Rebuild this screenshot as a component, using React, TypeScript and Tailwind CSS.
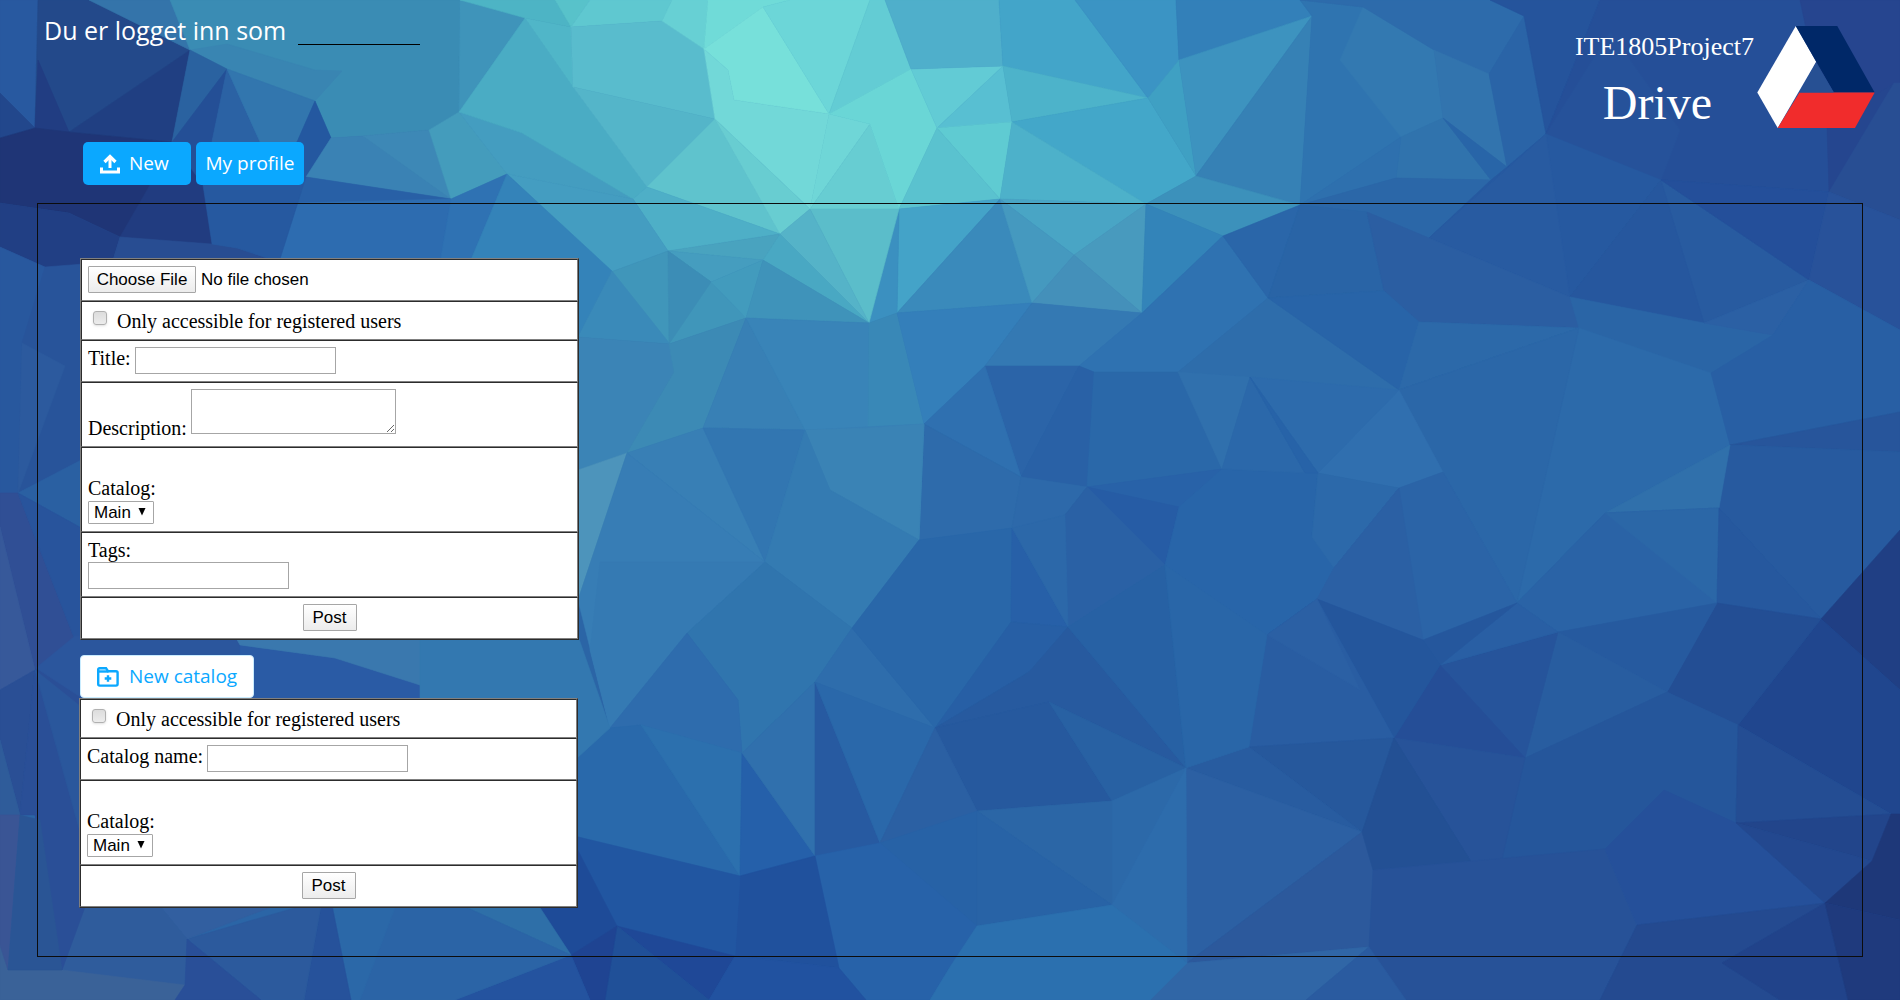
import React, { useId } from "react";

// Facets of the low-poly wallpaper: [fill, points] on a 1900 x 1000 canvas.
const FACETS: [string, string][] = [
  ["#2859a0", "0,0 38,0 35,128 0,93"],
  ["#22478c", "0,93 35,128 0,138"],
  ["#23498a", "38,0 89,0 190,50 69,132 35,128"],
  ["#213d82", "38,60 69,132 35,128"],
  ["#203f82", "69,132 190,50 172,142"],
  ["#1f3576", "0,138 35,128 69,132 172,142 203,185 212,244 120,237 69,213 0,203"],
  ["#213f84", "0,203 69,213 120,237 110,270 45,267 0,247"],
  ["#213c80", "172,142 203,142 203,185 212,244 120,237 150,185"],
  ["#3474aa", "89,0 170,0 190,50"],
  ["#3a8cb4", "170,0 460,0 459,112 429,130 363,136 331,138 315,101 227,69 190,50"],
  ["#3985b2", "190,50 227,44 315,70 342,71 315,101 227,69"],
  ["#2a62a0", "190,50 227,69 172,142"],
  ["#244f96", "227,69 203,185 172,142"],
  ["#2b62a4", "227,69 260,142 203,185"],
  ["#3276ae", "227,69 315,101 297,142 260,142"],
  ["#2458a0", "315,101 331,138 306,177 260,190 203,185 297,142"],
  ["#3a82b4", "331,138 363,136 451,199 306,177"],
  ["#3d88b6", "363,136 429,130 451,199"],
  ["#449cbc", "429,130 459,112 507,174 451,199"],
  ["#449dc0", "459,112 522,133 633,199 507,174"],
  ["#3f94ba", "460,0 525,18 459,112"],
  ["#4aacc4", "525,18 573,87 647,187 633,199 522,133 459,112"],
  ["#50b6c8", "525,18 571,27 573,87"],
  ["#4db4c5", "460,0 555,0 571,27 525,18"],
  ["#58c2ca", "555,0 590,0 571,27"],
  ["#5fc8d0", "590,0 672,0 662,21 571,27"],
  ["#59bccd", "571,27 662,21 704,49 715,119 573,87"],
  ["#54b5c9", "573,87 715,119 647,187"],
  ["#67d0d4", "662,21 672,0 708,0 704,49"],
  ["#70dbd8", "708,0 790,0 763,7 704,49"],
  ["#77e0da", "704,49 763,7 829,114 734,100 728,70"],
  ["#6cd6d8", "763,7 790,0 870,0 829,114"],
  ["#63ccd4", "870,0 885,0 911,69 829,114"],
  ["#72d8d8", "704,49 728,70 734,100 829,114 810,209 715,119"],
  ["#5fc3cd", "715,119 780,234 647,187"],
  ["#68cdd1", "715,119 810,209 780,234"],
  ["#6fd6d7", "829,114 870,124 810,209"],
  ["#67cdd2", "870,124 899,209 810,209"],
  ["#6ad6d6", "829,114 911,69 937,128 899,209 870,124"],
  ["#62cbd5", "911,69 1003,66 937,128"],
  ["#58bfd2", "937,128 1003,66 1012,122"],
  ["#5fcbd2", "937,128 1012,122 1000,199"],
  ["#5ac2cf", "937,128 1000,199 899,209"],
  ["#4fafcb", "885,0 999,0 1003,66 911,69"],
  ["#43a5c9", "999,0 1075,0 1148,98 1003,66"],
  ["#4db3ca", "1003,66 1148,98 1012,122"],
  ["#43a7c9", "1012,122 1148,98 1196,176 1146,204"],
  ["#4db1ca", "1012,122 1146,204 1000,199"],
  ["#3b94c4", "1075,0 1176,0 1179,60 1148,98"],
  ["#3fa0c3", "1148,98 1179,60 1196,176"],
  ["#3380b9", "1176,0 1300,0 1312,16 1179,60"],
  ["#3d93bf", "1179,60 1312,16 1196,176"],
  ["#3681b5", "1312,16 1300,205 1196,176"],
  ["#3c91bb", "1196,176 1300,205 1223,236 1146,204"],
  ["#44a3c8", "899,209 1000,199 897,313"],
  ["#3b90c0", "899,209 869,323 897,313"],
  ["#3a8abb", "1000,199 1032,303 897,313"],
  ["#49a5c5", "1000,199 1146,204 1074,255"],
  ["#4599bf", "1000,199 1074,255 1032,303"],
  ["#489abe", "1074,255 1146,204 1142,313"],
  ["#4490ba", "1032,303 1074,255 1142,313"],
  ["#3384b9", "1146,204 1223,236 1142,313"],
  ["#5bbdca", "810,209 899,209 869,323"],
  ["#55b3c8", "780,234 810,209 869,323"],
  ["#4eafc7", "633,199 647,187 780,234 668,251"],
  ["#449dc1", "507,174 633,199 668,251 611,272"],
  ["#49a3bf", "668,251 780,234 763,260"],
  ["#49a8c3", "780,234 869,323 763,260"],
  ["#459dbf", "668,251 763,260 711,282"],
  ["#4096ba", "668,251 711,282 746,318 669,344 611,272"],
  ["#3c8db6", "668,251 711,282 669,344"],
  ["#429bbd", "711,282 763,260 746,318"],
  ["#3f93ba", "763,260 869,323 746,318"],
  ["#2860a6", "203,185 306,177 451,199 440,262 279,262"],
  ["#2d6cb0", "297,203 451,199 440,262 279,262"],
  ["#2f72b3", "451,199 507,174 470,262 440,262"],
  ["#3483b9", "507,174 612,271 578,337 470,262"],
  ["#3a8ab9", "612,271 670,344 578,337"],
  ["#3b84b6", "578,337 670,344 674,372 627,453 578,470"],
  ["#3c8ab5", "669,344 746,318 703,428 627,453 674,372"],
  ["#3880b5", "746,318 805,430 703,428"],
  ["#3984b8", "746,318 869,323 868,428 805,430"],
  ["#3988b7", "869,323 897,313 924,424 868,428"],
  ["#347fba", "897,313 1032,303 985,366 924,424"],
  ["#3479b3", "1032,303 1142,313 1079,366 985,366"],
  ["#2f72b1", "1142,313 1223,236 1268,298 1178,372 1094,372 1079,366"],
  ["#2a66a9", "1223,236 1300,205 1268,298"],
  ["#2e6dab", "1268,298 1384,291 1399,390 1312,480 1250,377 1178,372"],
  ["#2b64a8", "985,366 1079,366 1021,477"],
  ["#2961a6", "1079,366 1094,372 1087,487 1021,477"],
  ["#2a68a9", "1094,372 1178,372 1222,469 1087,487"],
  ["#3070ad", "1178,372 1250,377 1222,469"],
  ["#2f70b0", "985,366 1021,477 924,424"],
  ["#2e6bab", "924,424 1021,477 1012,528 992,531 919,540"],
  ["#2d69aa", "1021,477 1087,487 1065,515 1068,627 1012,528"],
  ["#2862a8", "1087,487 1222,469 1179,507"],
  ["#265ca5", "1087,487 1179,507 1165,565"],
  ["#2a61a5", "1065,515 1087,487 1165,565 1068,627"],
  ["#2865a9", "1222,469 1318,473 1312,537 1334,568 1317,599 1267,635 1165,565 1179,507"],
  ["#2f74b0", "1300,0 1363,7 1434,50 1443,118 1401,137 1300,205 1312,16"],
  ["#3379b1", "1363,7 1434,50 1443,118 1401,137 1340,60"],
  ["#2d6bab", "1300,0 1490,0 1524,16 1489,74 1434,50 1363,7"],
  ["#3274ae", "1434,50 1489,74 1507,167 1443,118"],
  ["#3073ad", "1401,137 1443,118 1491,180 1396,178"],
  ["#2e70ae", "1300,205 1401,137 1396,178"],
  ["#2b67a8", "1300,205 1396,178 1491,180 1429,238 1367,212"],
  ["#2a64a7", "1489,74 1524,16 1546,134 1507,167"],
  ["#2865a8", "1443,118 1507,167 1491,180"],
  ["#25549c", "1490,0 1600,0 1546,134 1524,16"],
  ["#254f98", "1600,0 1900,0 1900,83 1829,192 1661,180 1546,134"],
  ["#26529a", "1610,32 1680,130 1661,180 1546,134"],
  ["#26458f", "1800,0 1900,0 1900,83 1827,127"],
  ["#2659a0", "1546,134 1661,180 1570,297 1429,238 1491,180 1507,167"],
  ["#285ba1", "1546,134 1570,297 1429,238"],
  ["#285ba0", "1661,180 1809,280 1704,323 1570,297"],
  ["#26579e", "1661,180 1704,323 1570,297"],
  ["#244f9a", "1661,180 1829,192 1809,280"],
  ["#25468f", "1827,127 1894,83 1829,192"],
  ["#284e93", "1894,83 1900,83 1900,220 1829,192"],
  ["#28529a", "1829,192 1900,220 1900,330 1809,280"],
  ["#2964a6", "1300,205 1367,212 1384,291 1268,298"],
  ["#2b5ea2", "1367,212 1429,238 1570,297 1579,328 1419,322 1384,291"],
  ["#2864a8", "1384,291 1419,322 1399,390 1268,298"],
  ["#2c69a9", "1419,322 1579,328 1399,390"],
  ["#2a65a6", "1570,297 1704,323 1773,335 1711,373 1579,328"],
  ["#2c6aaa", "1399,390 1579,328 1711,373 1730,445 1605,513 1517,603 1443,472"],
  ["#2b67a8", "1579,328 1517,603 1443,472 1399,390"],
  ["#306faf", "1399,390 1443,472 1399,488 1318,473"],
  ["#2d6bac", "1250,377 1399,390 1318,473"],
  ["#2b68aa", "1250,377 1305,473 1222,469"],
  ["#2763a8", "1250,377 1318,473 1305,473"],
  ["#2b60a4", "1704,323 1809,280 1773,335"],
  ["#285fa4", "1773,335 1809,280 1900,330 1900,412 1730,445 1711,373"],
  ["#27559b", "1730,445 1900,412 1900,452"],
  ["#275a9f", "1730,445 1900,452 1900,530 1821,619 1719,508"],
  ["#3070ab", "1605,513 1730,445 1719,508"],
  ["#2c69aa", "1318,473 1399,488 1334,568 1312,537"],
  ["#2b64a7", "1399,488 1443,472 1517,603 1423,640 1317,599 1334,568"],
  ["#2b60a4", "1399,488 1423,640 1317,599 1334,568"],
  ["#2a63a6", "1605,513 1719,508 1717,603 1558,632 1517,603"],
  ["#2b67a7", "1605,513 1719,508 1717,603"],
  ["#26589e", "1719,508 1821,619 1717,603"],
  ["#203f84", "1900,530 1821,619 1900,690"],
  ["#20468e", "1821,619 1900,690 1900,814 1891,814 1738,725"],
  ["#234e94", "1717,603 1821,619 1738,725 1667,692"],
  ["#265a9f", "1558,632 1717,603 1667,692"],
  ["#285da0", "1558,632 1667,692 1525,758"],
  ["#26549b", "1558,632 1440,665 1525,758"],
  ["#295fa4", "1517,603 1558,632 1440,665"],
  ["#25579d", "1517,603 1440,665 1423,640"],
  ["#254e97", "1440,665 1525,758 1394,738"],
  ["#24569c", "1317,599 1423,640 1440,665 1394,738"],
  ["#295da2", "1317,599 1394,738 1249,747 1267,635"],
  ["#2b60a4", "1317,599 1360,690 1267,635"],
  ["#26589c", "1249,747 1394,738 1362,832"],
  ["#285ca0", "1186,768 1249,747 1362,832"],
  ["#2c60a3", "1186,768 1362,832 1187,963"],
  ["#2c599c", "1362,832 1373,870 1369,947 1187,963"],
  ["#25569b", "1525,758 1667,692 1738,725 1736,823 1605,849 1475,868 1394,738"],
  ["#275399", "1394,738 1525,758 1500,868 1475,868"],
  ["#235094", "1394,738 1475,868 1373,870 1362,832"],
  ["#275298", "1373,870 1605,849 1637,925 1600,1000 1400,1000 1369,947"],
  ["#25509a", "1605,849 1664,790 1736,823 1825,903 1637,925"],
  ["#244d93", "1738,725 1891,814 1736,823"],
  ["#22458b", "1736,823 1891,814 1872,861"],
  ["#23488f", "1736,823 1872,861 1825,903"],
  ["#1e3879", "1891,814 1900,814 1900,920 1825,903 1872,861"],
  ["#244a90", "1637,925 1825,903 1722,963 1780,1000 1600,1000"],
  ["#21438a", "1825,903 1848,1000 1780,1000 1722,963"],
  ["#1f3a7d", "1825,903 1900,920 1900,1000 1848,1000"],
  ["#3066a6", "1187,963 1369,947 1306,1000 1150,1000"],
  ["#2a5ba0", "1369,947 1406,1000 1306,1000"],
  ["#387fb5", "703,428 805,430 924,424 919,540 765,562 627,453"],
  ["#3276b1", "703,428 805,430 765,562"],
  ["#3a83b5", "805,430 868,428 924,424 919,540 830,490"],
  ["#347bb2", "805,430 830,490 919,540 852,628 765,562"],
  ["#4d94bb", "627,453 578,600 578,470"],
  ["#377db5", "627,453 765,562 687,633 610,728 578,600"],
  ["#357ab3", "600,562 765,562 687,633 610,728 590,650"],
  ["#3075ae", "765,562 852,628 815,682 742,753 738,700 687,633"],
  ["#2e6cad", "687,633 738,700 742,753 641,725 610,728"],
  ["#2969ab", "610,728 641,725 740,876 600,842 570,835 575,760"],
  ["#2c70ae", "641,725 742,753 740,876"],
  ["#2560aa", "742,753 815,856 740,876"],
  ["#3070ad", "742,753 815,682 815,856"],
  ["#275aa1", "815,682 880,843 815,856"],
  ["#2e6dac", "815,682 852,628 935,728"],
  ["#2a68aa", "815,682 935,728 880,843"],
  ["#2967a9", "852,628 919,540 1012,528 1011,622 935,728"],
  ["#2760a8", "1012,528 1068,627 1011,622"],
  ["#2c68a9", "1012,528 1065,515 1068,627"],
  ["#275fa5", "1011,622 1068,627 1029,672 935,728"],
  ["#275a9f", "1068,627 1186,768 1049,702 935,728 1029,672"],
  ["#2761a4", "1068,627 1165,565 1186,768"],
  ["#2966a8", "1165,565 1267,635 1249,747 1186,768"],
  ["#26599e", "935,728 1049,702 1112,801 977,811"],
  ["#2861a3", "1049,702 1186,768 1112,801"],
  ["#2b60a3", "935,728 977,811 977,926 880,843"],
  ["#2762a6", "977,811 977,926 880,843"],
  ["#2b66a6", "977,811 1112,801 1112,905"],
  ["#2863a6", "977,811 1112,905 977,926"],
  ["#2c69a9", "1112,801 1186,768 1112,905"],
  ["#2d6cac", "1186,768 1187,963 1112,905"],
  ["#2762a9", "815,856 880,843 977,926 950,967 930,1000 866,1000 839,968"],
  ["#2b70af", "977,926 1112,905 1187,963 1150,1000 930,1000 950,967"],
  ["#20519d", "740,876 815,856 839,968 735,956"],
  ["#2156a1", "570,835 740,876 735,956 617,926"],
  ["#1f4897", "617,926 735,956 709,1000"],
  ["#205098", "617,926 709,1000 605,1000"],
  ["#2152a0", "735,956 839,968 866,1000 709,1000"],
  ["#1e4b98", "530,895 570,835 617,926 571,955"],
  ["#1f4492", "571,955 617,926 605,1000 590,1000"],
  ["#24539f", "571,955 590,1000 455,1000"],
  ["#2e6fa8", "450,900 535,900 571,955"],
  ["#2b64a6", "390,900 450,900 571,955 455,1000 351,1000"],
  ["#2b68a8", "331,900 398,900 360,1000 351,1000"],
  ["#26529b", "322,900 331,900 351,1000 304,1000"],
  ["#2c5a9d", "187,939 322,900 304,1000 261,1000"],
  ["#325fa0", "155,900 290,900 187,939"],
  ["#2f5c9c", "75,880 155,900 187,939 185,985 62,970"],
  ["#3a6298", "0,945 8,970 62,970 185,985 175,1000 0,1000"],
  ["#294f98", "185,985 187,939 261,1000 175,1000"],
  ["#28589e", "0,247 45,267 22,343 18,493 0,500"],
  ["#28549a", "45,267 110,262 110,640 18,493 22,343"],
  ["#2c5a9e", "22,343 65,366 18,493"],
  ["#2a60a2", "18,493 85,458 85,530"],
  ["#304f95", "0,493 18,493 75,640 35,670 0,527"],
  ["#28549c", "18,493 85,530 85,640 75,640"],
  ["#37599a", "0,527 35,670 0,690"],
  ["#2a4f95", "0,690 35,670 20,815 0,740"],
  ["#2a4f97", "35,670 72,645 85,700 85,907 62,970 35,815 20,815"],
  ["#2a579c", "35,670 85,710 85,850"],
  ["#2f5c9a", "0,740 20,815 0,815"],
  ["#3a5595", "0,815 20,815 8,970 0,945"],
  ["#2a5595", "20,815 40,820 62,970 8,970"],
  ["#2b569d", "75,636 240,636 240,700 85,700 36,668"],
  ["#2a5ba5", "240,645 335,658 420,685 430,700 240,700"],
  ["#3a78ae", "235,636 420,636 420,685 335,658 240,645"],
  ["#3378b0", "420,636 578,636 610,728 575,760 570,700 420,700"],
  ["#284d92", "120,237 212,244 237,248 279,262 110,270"],
  ["#2659a0", "203,185 306,177 279,262 237,248 212,244"],
];

function Wallpaper() {
  return (
    <svg
      className="absolute inset-0 -z-10 h-full w-full"
      viewBox="0 0 1900 1000"
      preserveAspectRatio="xMidYMid slice"
      aria-hidden="true"
    >
      <rect width="1900" height="1000" fill="#2b65a6" />
      {FACETS.map(([fill, points], i) => (
        <polygon key={i} points={points} fill={fill} stroke={fill} strokeWidth="0.6" />
      ))}
    </svg>
  );
}

function UploadIcon() {
  return (
    <svg width="20" height="20" viewBox="0 0 20 20" fill="none" stroke="currentColor" aria-hidden="true">
      <path d="M1.500 13.500v4.500h17v-4.500" strokeWidth="3" />
      <path d="M10 14V4" strokeWidth="3" />
      <path d="M4.500 8 10 2.500 15.500 8" strokeWidth="3.200" />
    </svg>
  );
}

function FolderPlusIcon() {
  return (
    <svg width="22" height="20" viewBox="0 0 22 20" fill="none" stroke="currentColor" aria-hidden="true">
      <path d="M1.200 17V2.500a1.300 1.300 0 0 1 1.300-1.300h6.500l2 3H19a1.600 1.600 0 0 1 1.600 1.600V17a1.600 1.600 0 0 1-1.600 1.600H2.800A1.600 1.600 0 0 1 1.200 17Z" strokeWidth="2.400" />
      <path d="M1.500 4.500h10" strokeWidth="2.400" />
      <path d="M11 8.200v6.600M7.700 11.500h6.600" strokeWidth="2.400" />
    </svg>
  );
}

function DriveLogo() {
  return (
    <svg width="118" height="102" viewBox="0 0 351 305" role="img" aria-label="Drive logo">
      <polygon points="115,0 176,107 61,305 0,199" fill="#fff" />
      <polygon points="115,0 239,0 351,199 229,199" fill="#002868" />
      <polygon points="126,199 351,199 292,305 61,305" fill="#f12c2c" />
      <polygon points="176,109 229,199 126,199" fill="#275093" />
    </svg>
  );
}

function FormTable({ children }: { children: React.ReactNode }) {
  return (
    <table className="w-[499px] border-separate border-spacing-0 border border-t-[#808080] border-l-[#808080] border-r-[#2c2c2c] border-b-[#2c2c2c] bg-white text-[20px] leading-[23px] text-black">
      <tbody>{children}</tbody>
    </table>
  );
}

function Row({ className = "", children }: { className?: string; children: React.ReactNode }) {
  return (
    <tr>
      <td
        className={`border border-t-[#2c2c2c] border-l-[#2c2c2c] border-r-[#808080] border-b-[#808080] px-[6px] ${className}`}
      >
        {children}
      </td>
    </tr>
  );
}

function TextField({ id }: { id: string }) {
  return (
    <input
      id={id}
      type="text"
      className="h-[27px] w-[201px] border border-[#a6a6a6] bg-white px-1 font-['Liberation_Sans',sans-serif] text-[17px]"
    />
  );
}

function RegisteredOnly() {
  const id = useId();
  return (
    <Row className="pt-[8px] pb-[6px]">
      <div className="flex items-start gap-[10px] pl-[5px]">
        <input
          id={id}
          type="checkbox"
          className="mt-px h-[14px] w-[14px] appearance-none rounded-[3px] border border-[#b0b0b0] bg-linear-to-b from-[#dcdcdc] to-[#ececec] shadow-sm checked:from-[#5b8fd6] checked:to-[#5b8fd6]"
        />
        <label htmlFor={id}>Only accessible for registered users</label>
      </div>
    </Row>
  );
}

function CatalogSelect() {
  const id = useId();
  return (
    <Row className="pt-[29px] pb-[7px]">
      <label htmlFor={id} className="block h-[24px]">
        Catalog:
      </label>
      <div className="relative w-[66px]">
        <select
          id={id}
          className="block h-[23px] w-full appearance-none rounded-[1px] border border-[#a6a6a6] bg-white pl-[5px] font-['Liberation_Sans',sans-serif] text-[17px] leading-[20px]"
        >
          <option>Main</option>
        </select>
        <svg
          className="pointer-events-none absolute top-[7px] right-[8px]"
          width="8"
          height="8"
          viewBox="0 0 8 8"
          aria-hidden="true"
        >
          <path d="M0.500 0h7L4 7.500Z" fill="#000" />
        </svg>
      </div>
    </Row>
  );
}

function PostRow() {
  return (
    <Row className="pt-[6px] pb-[7px]">
      <button
        type="submit"
        className="mx-auto block h-[27px] w-[54px] rounded-[1px] border border-[#a6a6a6] bg-linear-to-b from-white to-[#ececec] font-['Liberation_Sans',sans-serif] text-[17px] leading-[24px]"
      >
        Post
      </button>
    </Row>
  );
}

export default function App() {
  return (
    <div className="relative isolate min-h-screen overflow-hidden pb-[43px] font-['Liberation_Serif',serif]">
      <Wallpaper />

      <header className="flex justify-between pr-[25px] pb-[18px] pl-[44px] text-white">
        <div>
          <div className="flex items-end gap-[12px] pt-[12px] font-['Open_Sans',sans-serif]">
            <label htmlFor="user" className="text-[25px] leading-[36px]">
              Du er logget inn som
            </label>
            <input
              id="user"
              readOnly
              className="mb-[3px] h-[30px] w-[122px] border-b border-black bg-transparent text-[20px] outline-none"
            />
          </div>
          <nav className="flex gap-[5px] pt-[94px] pl-[39px] font-['Open_Sans',sans-serif] text-[19px]">
            <button
              type="button"
              className="flex h-[43px] w-[108px] items-center gap-[9px] rounded-[5px] bg-[#0ba8ff] pl-[17px]"
            >
              <UploadIcon />
              New
            </button>
            <button type="button" className="h-[43px] w-[108px] rounded-[5px] bg-[#0ba8ff]">
              My profile
            </button>
          </nav>
        </div>
        <div className="flex items-start gap-[3px] pt-[26px]">
          <h1 className="flex flex-col items-center">
            <span className="pt-[6px] text-[26px] leading-[30px]">ITE1805Project7</span>
            <span className="pr-[14px] text-[48px] leading-[82px]">Drive</span>
          </h1>
          <DriveLogo />
        </div>
      </header>

      <main className="mx-[37px] border border-[#0c0c0c] px-[41px] pt-[54px] pb-[48px]">
        <form className="pl-[1px]" onSubmit={(e) => e.preventDefault()}>
          <FormTable>
            <Row className="pt-[6px] pb-[7px]">
              <input
                type="file"
                aria-label="Upload file"
                className="block h-[27px] font-['Liberation_Sans',sans-serif] text-[17px] leading-[20px] file:mr-[5px] file:h-[27px] file:w-[108px] file:rounded-[1px] file:border file:border-solid file:border-[#a6a6a6] file:bg-linear-to-b file:from-white file:to-[#ececec] file:px-0 file:text-center file:text-[17px] file:text-black"
              />
            </Row>
            <RegisteredOnly />
            <Row className="pt-[6px] pb-[7px]">
              <div className="flex items-start gap-[4px]">
                <label htmlFor="title">Title:</label>
                <TextField id="title" />
              </div>
            </Row>
            <Row className="h-[65px]">
              <div className="flex items-end gap-[4px]">
                <label htmlFor="description">Description:</label>
                <textarea
                  id="description"
                  className="mb-[6px] block h-[45px] w-[205px] border border-[#a6a6a6] bg-white p-[2px] font-['Liberation_Mono',monospace] text-[17px]"
                />
              </div>
            </Row>
            <CatalogSelect />
            <Row className="pt-[6px] pb-[7px]">
              <label htmlFor="tags" className="block h-[23px]">
                Tags:
              </label>
              <div className="flex">
                <TextField id="tags" />
              </div>
            </Row>
            <PostRow />
          </FormTable>
        </form>

        <button
          type="button"
          className="mt-[15px] ml-[1px] flex h-[43px] w-[174px] items-center gap-[10px] rounded-[4px] border border-[#c9ecff] bg-white pl-[16px] font-['Open_Sans',sans-serif] text-[19px] text-[#0ba8ff]"
        >
          <FolderPlusIcon />
          New catalog
        </button>

        <form onSubmit={(e) => e.preventDefault()}>
          <FormTable>
            <RegisteredOnly />
            <Row className="pt-[6px] pb-[7px]">
              <div className="flex items-start gap-[4px]">
                <label htmlFor="catalog-name">Catalog name:</label>
                <TextField id="catalog-name" />
              </div>
            </Row>
            <CatalogSelect />
            <PostRow />
          </FormTable>
        </form>
      </main>
    </div>
  );
}
